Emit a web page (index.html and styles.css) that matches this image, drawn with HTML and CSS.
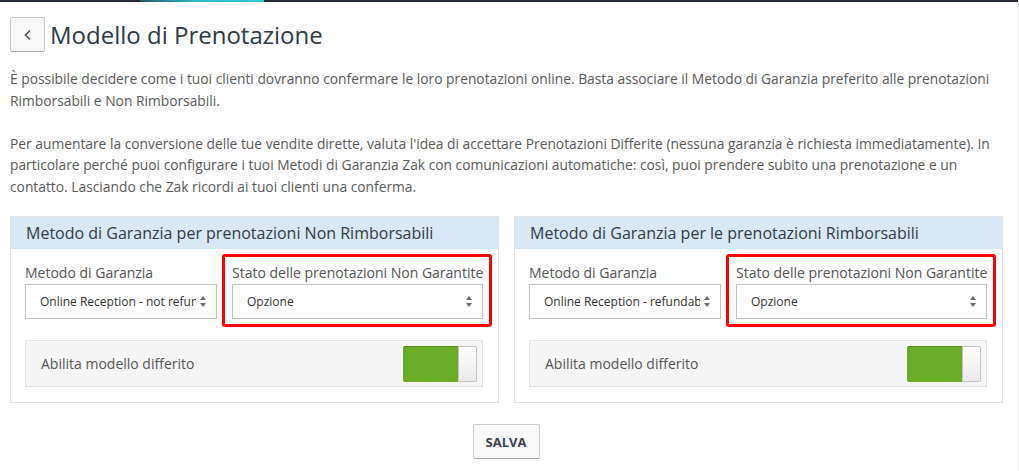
FILE: index.html
```html
<!DOCTYPE html>
<html lang="it">
<head>
<meta charset="utf-8">
<title>Modello di Prenotazione</title>
<link rel="stylesheet" href="styles.css">
</head>
<body>
<div class="topbar"><div class="topbar-accent"></div></div>
<main class="page">
  <header class="page-head">
    <button class="back-btn" type="button" aria-label="Indietro">
      <svg width="10" height="14" viewBox="0 0 10 14"><polyline points="7,2.5 2.5,7 7,11.5" fill="none" stroke="#555" stroke-width="1.6"/></svg>
    </button>
    <h1 class="page-title">Modello di Prenotazione</h1>
  </header>

  <p class="intro">È possibile decidere come i tuoi clienti dovranno confermare le loro prenotazioni online. Basta associare il Metodo di Garanzia preferito alle prenotazioni Rimborsabili e Non Rimborsabili.</p>
  <p class="intro">Per aumentare la conversione delle tue vendite dirette, valuta l'idea di accettare Prenotazioni Differite (nessuna garanzia è richiesta immediatamente). In particolare perché puoi configurare i tuoi Metodi di Garanzia Zak con comunicazioni automatiche: così, puoi prendere subito una prenotazione e un contatto. Lasciando che Zak ricordi ai tuoi clienti una conferma.</p>

  <div class="panels">
    <section class="panel">
      <div class="panel-head">Metodo di Garanzia per prenotazioni Non Rimborsabili</div>
      <div class="panel-body">
        <div class="fields">
          <div class="field">
            <label class="field-label">Metodo di Garanzia</label>
            <div class="select"><span class="select-text">Online Reception - not refundable</span><svg class="select-arrow" width="6" height="11" viewBox="0 0 6 11"><path d="M3 0L6 4H0Z M3 11L0 7H6Z" fill="#666"/></svg></div>
          </div>
          <div class="field highlighted">
            <label class="field-label">Stato delle prenotazioni Non Garantite</label>
            <div class="select"><span class="select-text">Opzione</span><svg class="select-arrow" width="6" height="11" viewBox="0 0 6 11"><path d="M3 0L6 4H0Z M3 11L0 7H6Z" fill="#666"/></svg></div>
          </div>
        </div>
        <div class="toggle-row">
          <span class="toggle-label">Abilita modello differito</span>
          <div class="switch"><span class="switch-on"></span><span class="switch-knob"></span></div>
        </div>
      </div>
    </section>

    <section class="panel">
      <div class="panel-head">Metodo di Garanzia per le prenotazioni Rimborsabili</div>
      <div class="panel-body">
        <div class="fields">
          <div class="field">
            <label class="field-label">Metodo di Garanzia</label>
            <div class="select"><span class="select-text">Online Reception - refundable</span><svg class="select-arrow" width="6" height="11" viewBox="0 0 6 11"><path d="M3 0L6 4H0Z M3 11L0 7H6Z" fill="#666"/></svg></div>
          </div>
          <div class="field highlighted">
            <label class="field-label">Stato delle prenotazioni Non Garantite</label>
            <div class="select"><span class="select-text">Opzione</span><svg class="select-arrow" width="6" height="11" viewBox="0 0 6 11"><path d="M3 0L6 4H0Z M3 11L0 7H6Z" fill="#666"/></svg></div>
          </div>
        </div>
        <div class="toggle-row">
          <span class="toggle-label">Abilita modello differito</span>
          <div class="switch"><span class="switch-on"></span><span class="switch-knob"></span></div>
        </div>
      </div>
    </section>
  </div>

  <div class="actions">
    <button class="save-btn" type="button">SALVA</button>
  </div>
</main>
</body>
</html>
```
FILE: styles.css
```css
* { box-sizing: border-box; }
html, body { margin: 0; padding: 0; background: #fff; }
body {
  font-family: "Open Sans", "Liberation Sans", sans-serif;
  color: #555;
  border-right: 1px solid #ececec;
  width: 1019px;
  min-height: 471px;
}
.topbar {
  height: 2px;
  background: #262b35;
  width: 1018px;
}
.topbar-accent {
  margin-left: 140px;
  width: 124px;
  height: 2px;
  background: linear-gradient(90deg, #2b5866 0%, #2fb8c8 45%, #33cbd9 100%);
}
.page {
  padding: 15px 0 0 10px;
  width: 1003px;
}
.page-head {
  display: flex;
  align-items: center;
  gap: 5px;
  height: 35px;
}
.back-btn {
  width: 35px;
  height: 35px;
  padding: 0;
  border: 1px solid #c8c8c8;
  border-bottom-color: #aaa;
  border-radius: 2px;
  background: #f8f8f8;
  display: flex;
  align-items: center;
  justify-content: center;
}
.page-title {
  margin: 0;
  font-size: 24px;
  font-weight: 400;
  color: #2e3a48;
  line-height: 35px;
}
.intro {
  margin: 16px 0 21.5px;
  font-size: 13.8px;
  line-height: 21.5px;
  color: #5a5a5a;
}
.intro + .intro { margin-top: 0; margin-bottom: 0; }
.panels {
  display: grid;
  grid-template-columns: 489px 489px;
  gap: 15px;
  margin-top: 19px;
}
.panel {
  border: 1px solid #e2e2e2;
  background: #fff;
}
.panel-head {
  background: #d8e8f5;
  height: 32px;
  padding: 0 15px;
  font-size: 16px;
  line-height: 32px;
  color: #333b45;
}
.panel-body {
  padding: 14px 15px 15px 14px;
}
.fields {
  display: grid;
  grid-template-columns: 192px 1fr;
  gap: 15px;
}
.field { position: relative; }
.field-label {
  display: block;
  font-size: 14px;
  line-height: 20px;
  margin-bottom: 1px;
  color: #555;
  white-space: nowrap;
}
.highlighted::after {
  content: "";
  position: absolute;
  top: -9px;
  left: -10px;
  right: -9px;
  bottom: -8px;
  border: 3px solid #f00;
  border-radius: 3px;
  pointer-events: none;
}
.select {
  height: 35px;
  border: 1px solid #c4c4c4;
  background: #fff;
  display: flex;
  align-items: center;
  padding: 0 10px 0 14px;
  gap: 4px;
}
.select-text {
  flex: 1;
  overflow: hidden;
  white-space: nowrap;
  font-size: 12px;
  color: #333;
}
.select-arrow { flex: none; }
.toggle-row {
  margin-top: 21px;
  height: 47px;
  background: #f5f5f5;
  border: 1px solid #e3e3e3;
  display: flex;
  align-items: center;
  justify-content: space-between;
  padding: 0 5px 0 15px;
}
.toggle-label {
  font-size: 14px;
  color: #555;
}
.switch {
  display: flex;
  height: 36px;
  width: 74px;
}
.switch-on {
  width: 55px;
  background: #6aab28;
  border-top: 1px solid #4f8a1c;
  border-radius: 2px 0 0 2px;
}
.switch-knob {
  width: 19px;
  background: linear-gradient(#fff, #e9e9eb);
  border: 1px solid #c4c4c4;
  border-radius: 0 2px 2px 0;
}
.actions {
  display: flex;
  justify-content: center;
  margin-top: 21px;
}
.save-btn {
  width: 67px;
  height: 35px;
  margin-left: -1px;
  border: 1px solid #ccc;
  border-bottom-color: #a8a8a8;
  border-radius: 2px;
  background: #f8f8f8;
  font-family: "Open Sans", "Liberation Sans", sans-serif;
  font-weight: 700;
  font-size: 13px;
  color: #3a4350;
  padding: 0;
}
```
